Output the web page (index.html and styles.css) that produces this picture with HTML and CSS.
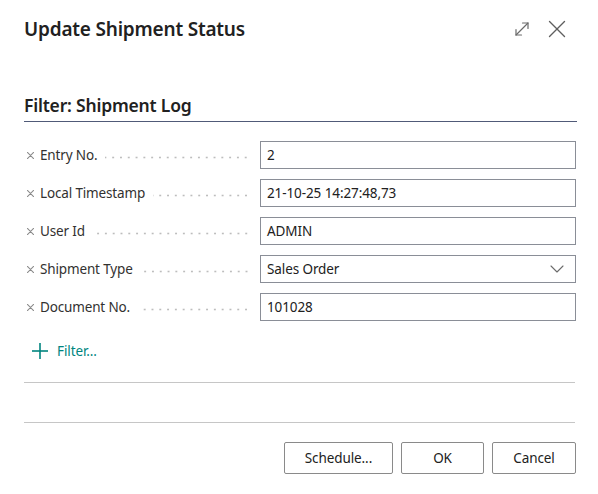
FILE: index.html
```html
<!DOCTYPE html>
<html lang="en">
<head>
<meta charset="utf-8">
<title>Update Shipment Status</title>
<link rel="stylesheet" href="styles.css">
</head>
<body>
<div class="dialog">
  <header class="dialog-header">
    <h1 class="dialog-title">Update Shipment Status</h1>
    <div class="header-actions">
      <button class="icon-btn" aria-label="Expand">
        <svg width="16" height="16" viewBox="0 0 16 16" fill="none" stroke="#6b6b6b" stroke-width="1.2" stroke-linecap="round" stroke-linejoin="round">
          <path d="M2 14 L14 2"/>
          <path d="M8.5 2 H14 V7.5"/>
          <path d="M2 8.5 V14 H7.5"/>
        </svg>
      </button>
      <button class="icon-btn" aria-label="Close">
        <svg width="18" height="18" viewBox="0 0 18 18" fill="none" stroke="#5f5f5f" stroke-width="1.4" stroke-linecap="round">
          <path d="M1.5 1.5 L16.5 16.5"/>
          <path d="M16.5 1.5 L1.5 16.5"/>
        </svg>
      </button>
    </div>
  </header>

  <section class="filter-section">
    <h2 class="section-title">Filter: Shipment Log</h2>

    <div class="filter-rows">
      <div class="filter-row">
        <label class="field-label"><svg class="remove" viewBox="0 0 8 8"><path d="M0.5 0.5 L7.5 7.5 M7.5 0.5 L0.5 7.5"/></svg><span class="label-text">Entry No.</span><span class="leader"></span></label>
        <div class="field-input">2</div>
      </div>
      <div class="filter-row">
        <label class="field-label"><svg class="remove" viewBox="0 0 8 8"><path d="M0.5 0.5 L7.5 7.5 M7.5 0.5 L0.5 7.5"/></svg><span class="label-text">Local Timestamp</span><span class="leader"></span></label>
        <div class="field-input">21-10-25 14:27:48,73</div>
      </div>
      <div class="filter-row">
        <label class="field-label"><svg class="remove" viewBox="0 0 8 8"><path d="M0.5 0.5 L7.5 7.5 M7.5 0.5 L0.5 7.5"/></svg><span class="label-text">User Id</span><span class="leader"></span></label>
        <div class="field-input">ADMIN</div>
      </div>
      <div class="filter-row">
        <label class="field-label"><svg class="remove" viewBox="0 0 8 8"><path d="M0.5 0.5 L7.5 7.5 M7.5 0.5 L0.5 7.5"/></svg><span class="label-text">Shipment Type</span><span class="leader"></span></label>
        <div class="field-input select">
          <span>Sales Order</span>
          <svg width="14" height="8" viewBox="0 0 14 8" fill="none" stroke="#6b6b6b" stroke-width="1.1" stroke-linecap="round" stroke-linejoin="round">
            <path d="M1 1 L7 7 L13 1"/>
          </svg>
        </div>
      </div>
      <div class="filter-row">
        <label class="field-label"><svg class="remove" viewBox="0 0 8 8"><path d="M0.5 0.5 L7.5 7.5 M7.5 0.5 L0.5 7.5"/></svg><span class="label-text">Document No.</span><span class="leader"></span></label>
        <div class="field-input">101028</div>
      </div>
    </div>

    <button class="add-filter">
      <svg width="16" height="16" viewBox="0 0 16 16" fill="none" stroke="#00857f" stroke-width="1.6">
        <path d="M8 0 V16"/>
        <path d="M0 8 H16"/>
      </svg>
      <span>Filter...</span>
    </button>
  </section>

  <div class="spacer"></div>

  <footer class="dialog-footer">
    <button class="btn btn-schedule">Schedule...</button>
    <button class="btn btn-ok">OK</button>
    <button class="btn btn-cancel">Cancel</button>
  </footer>
</div>
</body>
</html>
```

FILE: styles.css
```css
* {
  box-sizing: border-box;
}

html, body {
  margin: 0;
  padding: 0;
  background: #ffffff;
}

body {
  font-family: "Noto Sans", "Open Sans", "DejaVu Sans", sans-serif;
  color: #212121;
}

.dialog {
  width: 598px;
  height: 494px;
  padding: 0 22px 0 24px;
  display: flex;
  flex-direction: column;
}

/* Header */
.dialog-header {
  display: flex;
  align-items: center;
  justify-content: space-between;
  height: 56px;
  padding-top: 1px;
}

.dialog-title {
  margin: 0;
  font-size: 19px;
  font-weight: 600;
  letter-spacing: -0.2px;
  color: #212121;
}

.header-actions {
  display: flex;
  align-items: center;
  gap: 18px;
  margin-right: 10px;
}

.icon-btn {
  border: 0;
  background: none;
  padding: 0;
  display: flex;
  cursor: pointer;
}

/* Filter section */
.filter-section {
  padding-top: 37px;
}

.section-title {
  margin: 0;
  font-size: 17.5px;
  font-weight: 600;
  letter-spacing: -0.2px;
  line-height: 24px;
  padding-bottom: 4px;
  margin-right: -1px;
  border-bottom: 1px solid #505a78;
}

.filter-rows {
  display: flex;
  flex-direction: column;
  gap: 10px;
  margin-top: 19px;
}

.filter-row {
  display: grid;
  grid-template-columns: 236px 316px;
  align-items: center;
  height: 28px;
}

.field-label {
  display: flex;
  align-items: center;
  font-size: 13.5px;
  color: #323130;
  padding-right: 10px;
  height: 100%;
}

.remove {
  flex: none;
  width: 7px;
  height: 7px;
  margin: 1px 6px 0 3px;
  fill: none;
  stroke: #8a8a8a;
  stroke-width: 1.2;
  stroke-linecap: round;
}

.label-text {
  white-space: nowrap;
  letter-spacing: -0.15px;
}

.leader {
  flex: 1;
  align-self: stretch;
  margin-left: 8px;
  background-image: radial-gradient(circle, #bdbdbd 0.9px, transparent 1.2px);
  background-size: 7.8px 3px;
  background-repeat: repeat-x;
  background-position: right 60%;
}

.field-input {
  height: 28px;
  border: 1px solid #8a8e97;
  padding: 0 6px;
  font-size: 13.5px;
  letter-spacing: -0.1px;
  color: #212121;
  display: flex;
  align-items: center;
}

.field-input.select {
  justify-content: space-between;
  padding-right: 11px;
}

.add-filter {
  display: flex;
  align-items: center;
  gap: 9px;
  margin-top: 21px;
  margin-left: 8px;
  border: 0;
  background: none;
  padding: 0;
  font-family: inherit;
  font-size: 13.5px;
  letter-spacing: -0.1px;
  color: #00857f;
  cursor: pointer;
}

.spacer {
  margin-top: 22px;
  height: 41px;
  border-top: 1px solid #c6c6c6;
  border-bottom: 1px solid #c6c6c6;
  margin-right: 1px;
}

/* Footer */
.dialog-footer {
  display: flex;
  justify-content: flex-end;
  gap: 8px;
  margin-top: 19px;
}

.btn {
  height: 32px;
  border: 1px solid #8a8a8a;
  border-radius: 2px;
  background: #ffffff;
  font-family: inherit;
  font-size: 13.5px;
  letter-spacing: -0.1px;
  color: #212121;
  cursor: pointer;
  padding: 0;
}

.btn-schedule { width: 109px; }
.btn-ok { width: 83px; }
.btn-cancel { width: 84px; }
```
